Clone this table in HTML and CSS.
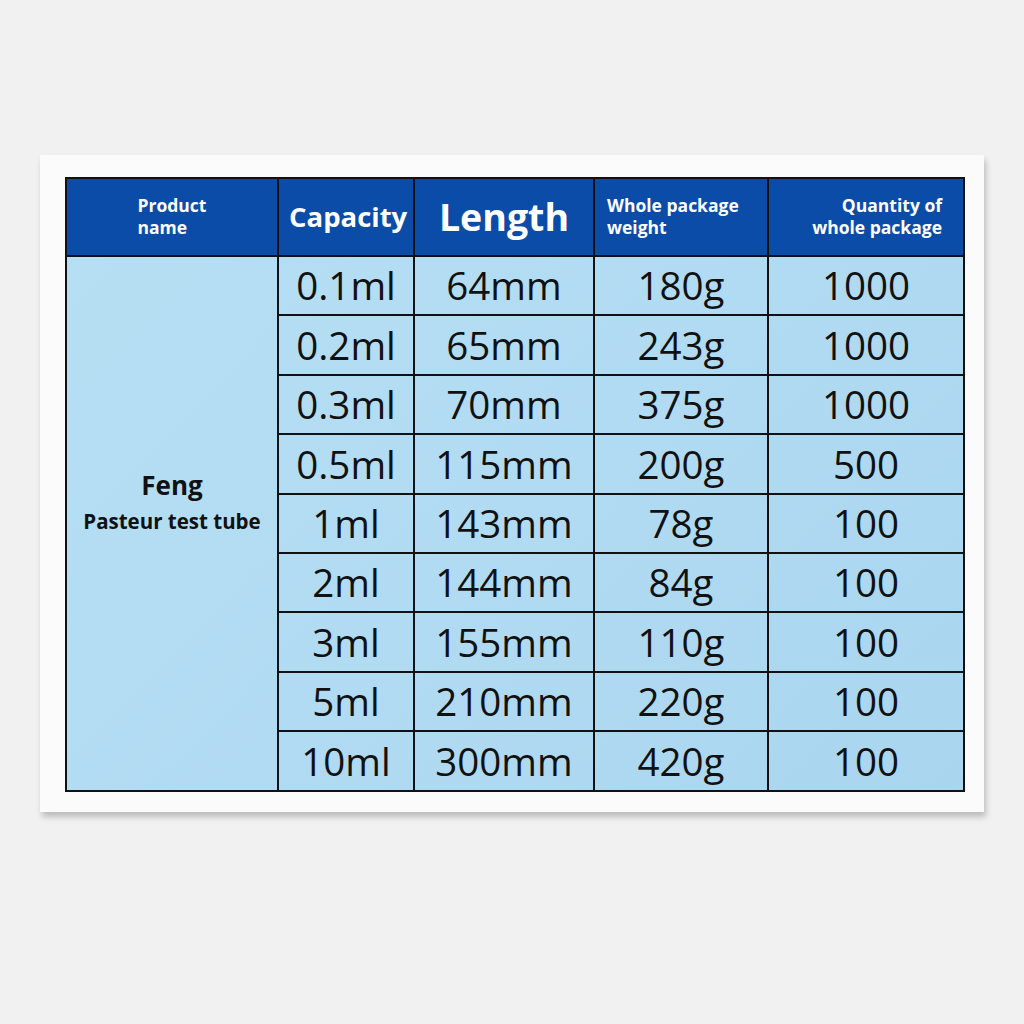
FILE: index.html
```html
<!DOCTYPE html>
<html>
<head>
<meta charset="utf-8">
<link rel="stylesheet" href="styles.css">
</head>
<body>
<div class="stage">
  <div class="card">
    <table class="spec">
      <colgroup>
        <col class="c1"><col class="c2"><col class="c3"><col class="c4"><col class="c5">
      </colgroup>
      <thead>
        <tr>
          <th class="h-small h-center"><span class="stack">Product<br>name</span></th>
          <th class="h-mid">Capacity</th>
          <th class="h-big">Length</th>
          <th class="h-small h-left">Whole package<br>weight</th>
          <th class="h-small h-right">Quantity of<br>whole package</th>
        </tr>
      </thead>
      <tbody>
        <tr>
          <td class="name" rowspan="9"><div class="brand">Feng</div><div class="prod">Pasteur test tube</div></td>
          <td>0.1ml</td><td>64mm</td><td>180g</td><td>1000</td>
        </tr>
        <tr><td>0.2ml</td><td>65mm</td><td>243g</td><td>1000</td></tr>
        <tr><td>0.3ml</td><td>70mm</td><td>375g</td><td>1000</td></tr>
        <tr><td>0.5ml</td><td>115mm</td><td>200g</td><td>500</td></tr>
        <tr><td>1ml</td><td>143mm</td><td>78g</td><td>100</td></tr>
        <tr><td>2ml</td><td>144mm</td><td>84g</td><td>100</td></tr>
        <tr><td>3ml</td><td>155mm</td><td>110g</td><td>100</td></tr>
        <tr><td>5ml</td><td>210mm</td><td>220g</td><td>100</td></tr>
        <tr><td>10ml</td><td>300mm</td><td>420g</td><td>100</td></tr>
      </tbody>
    </table>
  </div>
</div>
</body>
</html>
```
FILE: styles.css
```css
html, body {
  margin: 0;
  padding: 0;
}
body {
  width: 1024px;
  height: 1024px;
  background: #f1f1f1;
  font-family: "Open Sans", "Noto Sans", "DejaVu Sans", sans-serif;
}
.stage {
  padding-top: 155px;
  padding-left: 40px;
}
.card {
  width: 944px;
  height: 657px;
  box-sizing: border-box;
  background: #fbfbfb;
  padding: 22px 20px 0 25px;
  box-shadow: 2px 5px 6px rgba(0,0,0,0.22);
}
.spec {
  border-collapse: collapse;
  table-layout: fixed;
  width: 898px;
  border: 2px solid #111;
}
.c1 { width: 212px; }
.c2 { width: 136px; }
.c3 { width: 180px; }
.c4 { width: 174px; }
.c5 { width: 196px; }
.spec th {
  height: 76px;
  background: #0b4ca9;
  color: #ffffff;
  border: 2px solid #111;
  padding: 0 10px;
  font-weight: 700;
  line-height: 1.25;
}
.h-small { font-size: 17.5px; }
.h-mid { font-size: 27.5px; }
.h-big { font-size: 37.5px; }
.h-center { text-align: center; }
.stack { display: inline-block; text-align: left; }
.h-left { text-align: left; padding-left: 12px !important; }
.h-right { text-align: right; padding-right: 21px !important; }
.spec tbody {
  background: linear-gradient(135deg, #b6dff4 0%, #b1dbf2 50%, #a9d5ef 100%);
}
.spec td {
  height: 57.4px;
  border: 2px solid #111;
  text-align: center;
  font-size: 38.5px;
  color: #111;
  padding: 0;
  line-height: 1;
}
.spec td.name {
  vertical-align: middle;
  padding-bottom: 36px;
}
.brand {
  font-size: 26px;
  font-weight: 700;
  line-height: 1.3;
}
.prod {
  font-size: 20.5px;
  font-weight: 700;
  line-height: 1.85;
}
```
